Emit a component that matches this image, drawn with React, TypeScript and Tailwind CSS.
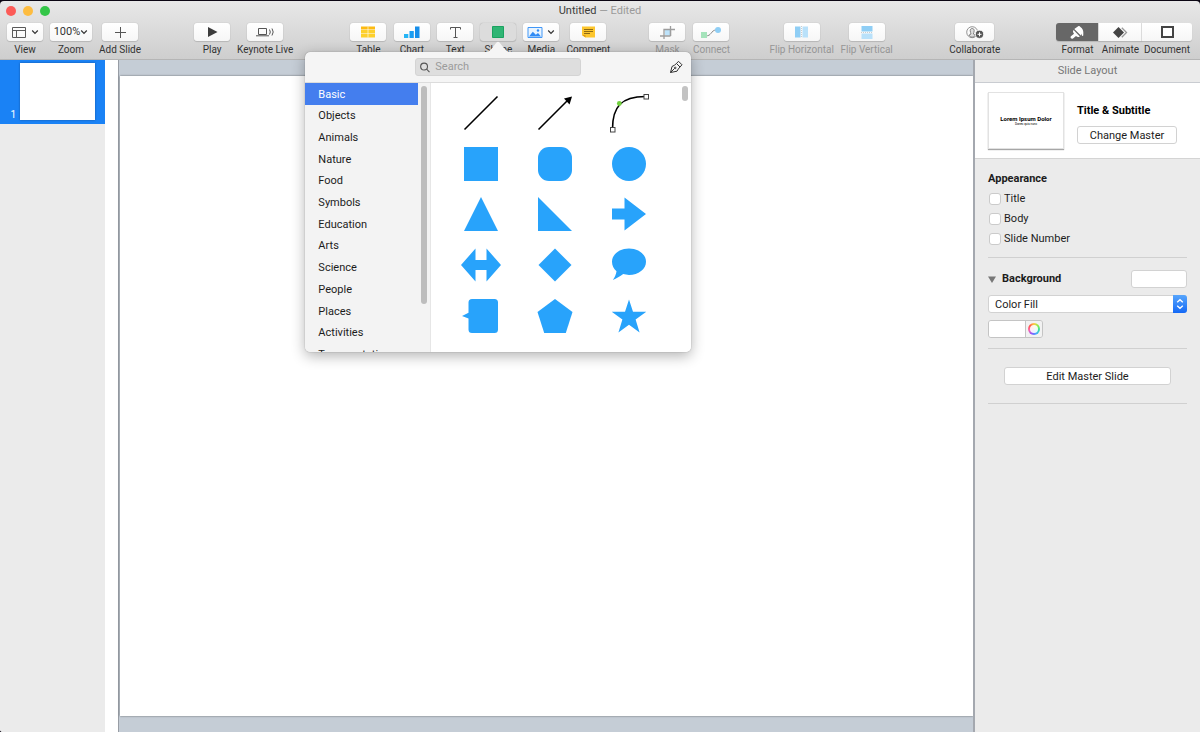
import { useState, type ReactNode } from 'react';
import clsx from 'clsx';

const CATEGORIES = [
  'Basic',
  'Objects',
  'Animals',
  'Nature',
  'Food',
  'Symbols',
  'Education',
  'Arts',
  'Science',
  'People',
  'Places',
  'Activities',
  'Transportation',
];

const SHAPES: { name: string; art: ReactNode }[] = [
  { name: 'Line', art: <path d="M3.5 36.5 36.5 3.5" stroke="#000" strokeWidth="1.6" /> },
  {
    name: 'Arrow',
    art: (
      <>
        <path d="M3.5 36.5 33 7" stroke="#000" strokeWidth="1.6" />
        <path d="M37 3.500 29 5.500l5.500 6z" fill="#000" />
      </>
    ),
  },
  {
    name: 'Curve',
    art: (
      <>
        <path d="M3.5 36C3.5 14 12 3.500 36.500 3.500" fill="none" stroke="#000" strokeWidth="1.6" />
        <rect x="1.500" y="34.500" width="4.500" height="4.500" fill="#fff" stroke="#444" strokeWidth="1" />
        <rect x="35" y="1.500" width="4.500" height="4.500" fill="#fff" stroke="#444" strokeWidth="1" />
        <circle cx="10.300" cy="10.500" r="2.400" fill="#70d13c" />
      </>
    ),
  },
  { name: 'Square', art: <path d="M3 3h34v34H3z" /> },
  { name: 'Rounded Rectangle', art: <rect x="3" y="3" width="34" height="34" rx="11" /> },
  { name: 'Circle', art: <circle cx="20" cy="20" r="17" /> },
  { name: 'Triangle', art: <path d="M20 3l17 34H3z" /> },
  { name: 'Right Triangle', art: <path d="M3 3l34 34H3z" /> },
  { name: 'Arrow Right', art: <path d="M3 14.500h12.500V3.500L37 20 15.500 36.500v-11H3z" /> },
  { name: 'Double Arrow', art: <path d="M0 20 14.500 3.500V15h11V3.500L40 20 25.500 36.500V25h-11v11.500z" /> },
  { name: 'Diamond', art: <path d="M20 3.500 36.500 20 20 36.500 3.500 20z" /> },
  {
    name: 'Speech Bubble',
    art: <path d="M20 3.500c9.500 0 17 5.800 17 13.200s-7.500 13.200-17 13.200c-2 0-4-.3-5.800-.8C11 31.500 7.500 33.600 3.800 35c2-2.700 3.300-5.500 3.700-8.700C4.700 23.800 3 20.500 3 16.700 3 9.300 10.500 3.500 20 3.500z" />,
  },
  {
    name: 'Callout',
    art: <path d="M11 3h22.500q3.500 0 3.500 3.500v27q0 3.500-3.500 3.500H11q-3.500 0-3.500-3.500V22.500L1 20l6.500-3.200V6.500Q7.500 3 11 3z" />,
  },
  { name: 'Pentagon', art: <path d="M20 3l17.500 13-6.700 21H9.200L2.500 16z" /> },
  { name: 'Star', art: <path d="M20 3.500l4 12.300h13.300l-10.700 7.800 4 12.900L20 28.700 9.400 36.500l4-12.900L2.700 15.800H16z" /> },
];

function Chevron() {
  return (
    <svg width="8" height="6" viewBox="0 0 8 6" fill="none" stroke="#333" strokeWidth="1.200">
      <path d="M1.200 1.500 4 4.300l2.800-2.800" />
    </svg>
  );
}

const ICONS = {
  view: (
    <svg width="14" height="11" viewBox="0 0 14 11" fill="none" stroke="#5a5a5a">
      <path d="M.5.500h13v10H.5zM.5 3.500h13M4.500 3.500v7" />
    </svg>
  ),
  add: (
    <svg width="11" height="11" viewBox="0 0 11 11" stroke="#555">
      <path d="M5.500 0v11M0 5.500h11" />
    </svg>
  ),
  play: (
    <svg width="11" height="10" viewBox="0 0 11 10" fill="#3c3c3c">
      <path d="M1 0l9.500 5L1 10z" />
    </svg>
  ),
  live: (
    <svg width="19" height="10" viewBox="0 0 19 10" fill="none" stroke="#555">
      <path d="M2.500 1.500h8v6h-8zM0 8.800h13" />
      <path d="M13.500 2.500q1.600 2.500 0 5M16 1.500q2.400 3.500 0 7" />
    </svg>
  ),
  table: (
    <svg width="14" height="12" viewBox="0 0 14 12">
      <path d="M0 .5h14v3H0z" fill="#fdbb12" />
      <path d="M0 4h14v3.500H0zM0 8h14v3.500H0z" fill="#fdd02c" />
      <path d="M7 .5v11" stroke="#fff" strokeWidth=".6" />
    </svg>
  ),
  chart: (
    <svg width="16" height="12" viewBox="0 0 16 12">
      <path d="M0 8h4.300v4H0z" fill="#25b4f5" />
      <path d="M5.500 5h4.300v7H5.500z" fill="#1a9df2" />
      <path d="M11 .5h4.500V12H11z" fill="#168eea" />
    </svg>
  ),
  text: (
    <svg width="11" height="11" viewBox="0 0 11 11" fill="none" stroke="#555">
      <path d="M.5 2.500v-2h10v2M5.500.5v10M3.500 10.500h4" />
    </svg>
  ),
  shape: (
    <svg width="12" height="12" viewBox="0 0 12 12">
      <path d="M.5.500h11v11H.5z" fill="#2fb574" stroke="#1ba260" />
    </svg>
  ),
  media: (
    <svg width="16" height="11" viewBox="0 0 16 11">
      <path d="M1 .5h14v10H1z" fill="#e8f4ff" stroke="#4197f7" />
      <path d="M2 9.500 5.800 4.800l3 3L11 6l3 3.500z" fill="#2f8bf5" />
      <circle cx="11" cy="3.500" r="1.200" fill="#2f8bf5" />
    </svg>
  ),
  comment: (
    <svg width="13" height="12" viewBox="0 0 13 12">
      <path d="M0 .5h13v11H3.500L0 9z" fill="#fdc62d" />
      <path d="M0 9h3.500v2.500z" fill="#e09c10" />
      <path d="M2 3.500h9M2 5.500h9M2 7.500h6" stroke="#8d6a14" />
    </svg>
  ),
  mask: (
    <svg width="15" height="13" viewBox="0 0 15 13" fill="none" stroke="#9d9d9d" strokeWidth="1.300">
      <path d="M5 4h5v5.500H5z" fill="#bde3fb" stroke="none" />
      <path d="M4 13V3.500h6.500V10M0 10h10.500" />
      <path d="M10.500 10V0M10.500 3.500H15" />
    </svg>
  ),
  connect: (
    <svg width="20" height="11" viewBox="0 0 20 11">
      <path d="M5 8.500c5 1.500 5-5.500 10-5.500" fill="none" stroke="#8b8b8b" />
      <path d="M0 5h6v6H0z" fill="#a5e3bb" />
      <circle cx="17" cy="3" r="3" fill="#8fcef5" />
    </svg>
  ),
  flipH: (
    <svg width="13" height="12" viewBox="0 0 13 12">
      <path d="M0 .5h5.500v11H0z" fill="#8fcef5" />
      <path d="M7.500.5H13v11H7.500z" fill="#b9e1fa" />
      <path d="M6.500 0v12" stroke="#ccc" strokeDasharray="1 1" />
    </svg>
  ),
  flipV: (
    <svg width="12" height="13" viewBox="0 0 12 13">
      <path d="M.5 0h11v5.500H.5z" fill="#8fcef5" />
      <path d="M.5 7.500h11V13H.5z" fill="#b9e1fa" />
      <path d="M0 6.500h12" stroke="#ccc" strokeDasharray="1 1" />
    </svg>
  ),
  collaborate: (
    <svg width="18" height="13" viewBox="0 0 18 13">
      <circle cx="6.200" cy="6.200" r="5.500" fill="none" stroke="#888" strokeWidth=".9" />
      <path d="M6.200 2.500c1.300 0 2 .9 2 2.200S7.400 7.200 7.400 8l2 1.200c-.7 1.300-1.900 1.900-3.200 1.900S3.700 10.500 3 9.200L5 8c0-.8-.8-2-.8-3.300s.7-2.200 2-2.200z" fill="#ddd" stroke="#777" strokeWidth=".9" />
      <circle cx="13.500" cy="8.300" r="4.100" fill="#555" stroke="#fff" strokeWidth=".8" />
      <path d="M13.500 6.300v4M11.500 8.300h4" stroke="#fff" />
    </svg>
  ),
  format: (
    <svg width="14" height="13" viewBox="0 0 14 13" fill="#fff">
      <path d="M4.300 3 8.200.3c.7-.5 1.700-.2 2.200.6 1.800 1.200 2.900 3.100 2.900 5.100v3.200c0 1-1.400 1-1.500 0l-.3-1.700-.6 2z" />
      <path d="M3.600 3.900l6.200 6.500c-1.200 1-2.700.7-3.800-.4l-3 2.400c-1.500 1-3.200-.7-2.100-2.100L4 7.700c-1.200-1.100-1.300-2.600-.4-3.800z" />
    </svg>
  ),
  animate: (
    <svg width="15" height="11" viewBox="0 0 15 11">
      <path d="M5.500 0 11 5.500 5.500 11 0 5.500z" fill="#444" />
      <path d="M8.800.8 13.500 5.500 8.800 10.200" fill="none" stroke="#999" strokeWidth="1.300" />
    </svg>
  ),
  document: (
    <svg width="13" height="12" viewBox="0 0 13 12">
      <path d="M1 1h11v10H1z" fill="#fff" stroke="#444" strokeWidth="2" />
    </svg>
  ),
};

interface ToolProps {
  label: string;
  width: string;
  face?: string;
  menu?: boolean;
  active?: boolean;
  disabled?: boolean;
  onClick?: () => void;
  children: ReactNode;
}

function Tool({ label, width, face = 'w-9 gap-1', menu, active, disabled, onClick, children }: ToolProps) {
  return (
    <button
      type="button"
      onClick={onClick}
      disabled={disabled}
      className={clsx('flex flex-col items-center gap-0.5 text-[10px]/[14px] whitespace-nowrap', width, disabled ? 'text-[#969696]' : 'text-[#333]')}
    >
      <span
        className={clsx(
          'flex h-[18px] items-center justify-center rounded-[3px] shadow-[0_0_1px_rgba(0,0,0,0.3),0_1px_1px_rgba(0,0,0,0.12)]',
          face,
          active ? 'bg-[#dcdcdc]' : 'bg-linear-to-b from-white to-[#f6f6f6]',
        )}
      >
        {children}
        {menu && <Chevron />}
      </span>
      {label}
    </button>
  );
}

function ShapePicker() {
  const [category, setCategory] = useState('Basic');

  return (
    <div className="absolute top-[18px] left-1/2 z-20 flex w-[386px] -translate-x-1/2 flex-col items-center">
      <svg className="relative z-10" width="26" height="11" viewBox="0 0 26 11">
        <path d="M0 11c4 0 5.500-2 7.500-4.500L11.500 1.500q1.500-1.500 3 0l4 5C20.500 9 22 11 26 11z" fill="#f5f5f5" />
      </svg>
      <div className="flex h-[300px] w-full flex-col overflow-hidden rounded-[5px] bg-[#f5f5f5] shadow-[0_0_1px_rgba(0,0,0,0.5),0_4px_14px_rgba(0,0,0,0.3)]">
        <div className="grid h-[31px] shrink-0 grid-cols-[1fr_auto_1fr] items-center border-b border-[#dcdcdc] px-2">
          <label className="col-start-2 flex h-[18px] w-[166px] items-center gap-[5px] rounded-[3px] border border-[#d4d4d4] bg-[#dedede] px-1">
            <svg width="11" height="11" viewBox="0 0 11 11" fill="none" stroke="#555" strokeWidth="1.200">
              <circle cx="4.500" cy="4.500" r="3.800" />
              <path d="M7.300 7.300 10.500 10.500" />
            </svg>
            <input aria-label="Search shapes" placeholder="Search" className="w-full bg-transparent pt-px text-[11px] outline-none placeholder:text-[#9b9b9b]" />
          </label>
          <button type="button" aria-label="Draw with pen" className="justify-self-end">
            <svg width="14" height="14" viewBox="0 0 14 14" fill="none" stroke="#333" strokeLinejoin="round">
              <path d="M1.500 12.500 3 6.500Q5.500 5.500 7.500 3.500l3.500 3.500q-2 2-3 4.200z" />
              <path d="M7.500 3.500 9.500 1.300 13 4.800 11 7M1.500 12.500 5.500 8.500" />
              <circle cx="6.200" cy="7.900" r=".8" />
            </svg>
          </button>
        </div>

        <div className="flex min-h-0 flex-1">
          <div className="flex w-[126px] shrink-0 overflow-hidden border-r border-[#e6e6e6] bg-[#f3f3f3]">
            <ul className="grid h-[282px] flex-1 auto-rows-fr">
              {CATEGORIES.map((name) => (
                <li key={name} className="grid">
                  <button
                    type="button"
                    onClick={() => setCategory(name)}
                    className={clsx('px-[13px] pt-0.5 text-left text-[11px]', name === category ? 'bg-[#447eee] text-white' : 'text-[#1c1c1c]')}
                  >
                    {name}
                  </button>
                </li>
              ))}
            </ul>
            <div className="mx-[3px] mt-[3px] h-[218px] w-[6px] rounded-full bg-[#bdbdbd]" />
          </div>
          <div className="flex flex-1 items-start justify-between bg-white pl-[13px]">
            <div className="grid h-[258px] auto-rows-fr grid-cols-[repeat(3,74px)] pt-[5px]">
              {SHAPES.map(({ name, art }) => (
                <button key={name} type="button" aria-label={name} className="flex items-center justify-center">
                  <svg width="40" height="40" viewBox="0 0 40 40" fill="#28a3fb">
                    {art}
                  </svg>
                </button>
              ))}
            </div>
            <div className="mt-[3px] mr-[3px] h-[15px] w-[6px] rounded-full bg-[#c3c3c3]" />
          </div>
        </div>
      </div>
    </div>
  );
}

function Header() {
  const [pickerOpen, setPickerOpen] = useState(true);
  const [tab, setTab] = useState('Format');
  const tabs = [
    { label: 'Format', icon: ICONS.format, width: 'w-[43px]' },
    { label: 'Animate', icon: ICONS.animate, width: 'w-[43px]' },
    { label: 'Document', icon: ICONS.document, width: 'w-[50px]' },
  ];

  return (
    <header className="relative z-10 h-[59px] shrink-0 rounded-t-[4px] border-b border-[#b5b5b5] bg-linear-to-b from-[#e8e8e8] to-[#cecece]">
      <div className="mb-0.5 grid h-5 grid-cols-[1fr_auto_1fr] items-center">
        <div className="flex gap-[7px] pl-[6px]">
          <button type="button" aria-label="Close" className="size-[10px] rounded-full bg-[#fc5b57]" />
          <button type="button" aria-label="Minimize" className="size-[10px] rounded-full bg-[#fdbc40]" />
          <button type="button" aria-label="Zoom window" className="size-[10px] rounded-full bg-[#34c648]" />
        </div>
        <h1 className="text-[11px]/[18px] text-[#9a9a9a]">
          <span className="text-[#3c3c3c]">Untitled</span> — Edited
        </h1>
      </div>

      <div className="flex items-start pr-2 pl-[3px]">
        <Tool label="View" width="w-11" face="w-9 gap-[5px]" menu>
          {ICONS.view}
        </Tool>
        <Tool label="Zoom" width="w-12" face="w-[42px] text-[11px]" menu>
          100%
        </Tool>
        <Tool label="Add Slide" width="w-[50px]">
          {ICONS.add}
        </Tool>

        <div className="grow-[49]" />
        <Tool label="Play" width="w-9">
          {ICONS.play}
        </Tool>
        <Tool label="Keynote Live" width="w-[70px]">
          {ICONS.live}
        </Tool>

        <div className="grow-[46]" />
        <Tool label="Table" width="w-11">
          {ICONS.table}
        </Tool>
        <Tool label="Chart" width="w-[43px]">
          {ICONS.chart}
        </Tool>
        <Tool label="Text" width="w-11">
          {ICONS.text}
        </Tool>
        <div className="relative">
          <Tool label="Shape" width="w-[42px]" active={pickerOpen} onClick={() => setPickerOpen(!pickerOpen)}>
            {ICONS.shape}
          </Tool>
          {pickerOpen && <ShapePicker />}
        </div>
        <Tool label="Media" width="w-11" menu>
          {ICONS.media}
        </Tool>
        <Tool label="Comment" width="w-[50px]">
          {ICONS.comment}
        </Tool>

        <div className="grow-[32]" />
        <Tool label="Mask" width="w-11" disabled>
          {ICONS.mask}
        </Tool>
        <Tool label="Connect" width="w-11" disabled>
          {ICONS.connect}
        </Tool>

        <div className="grow-[35]" />
        <Tool label="Flip Horizontal" width="w-[66px]" disabled>
          {ICONS.flipH}
        </Tool>
        <Tool label="Flip Vertical" width="w-16" disabled>
          {ICONS.flipV}
        </Tool>

        <div className="grow-[46]" />
        <Tool label="Collaborate" width="w-[60px]" face="w-[39px]">
          {ICONS.collaborate}
        </Tool>

        <div className="grow-[51]" />
        <div className="flex">
          {tabs.map(({ label, icon, width }) => (
            <button
              key={label}
              type="button"
              onClick={() => setTab(label)}
              className={clsx('group flex flex-col items-center gap-0.5 text-[10px]/[14px] text-[#333]', width)}
            >
              <span
                className={clsx(
                  'flex h-[18px] w-full items-center justify-center border-r border-[#dedede] shadow-[0_1px_1px_rgba(0,0,0,0.15)] group-first:rounded-l-[3px] group-last:rounded-r-[3px] group-last:border-r-0',
                  tab === label ? 'bg-[#676767]' : 'bg-linear-to-b from-white to-[#f6f6f6]',
                )}
              >
                {icon}
              </span>
              {label}
            </button>
          ))}
        </div>
      </div>
    </header>
  );
}

const PUSH_BUTTON = 'h-[18px] rounded-[3px] border border-[#d2d2d2] bg-white pt-px text-[11px]/[16px] text-[#1c1c1c]';

function Inspector() {
  const [expanded, setExpanded] = useState(true);

  return (
    <aside className="w-[227px] shrink-0 border-l-2 border-[#a4a8af] bg-[#ebebeb] text-[11px]/[20px] text-[#1c1c1c]">
      <h2 className="border-b border-[#c9ccd1] text-center text-[11px]/[22px] text-[#777]">Slide Layout</h2>

      <section className="flex h-[76px] items-center gap-[13px] border-b border-[#d4d4d4] bg-white px-[13px]">
        <div className="flex h-[57px] w-[76px] flex-col items-center justify-center border border-[#e2e2e2] bg-white text-center shadow-[0_1px_1px_rgba(0,0,0,0.35)]">
          <p className="text-[6px]/[7px] font-bold whitespace-nowrap text-black">Lorem Ipsum Dolor</p>
          <p className="text-[3px]/[5px] text-black">Donec quis nunc</p>
        </div>
        <div className="flex flex-1 flex-col items-start gap-[5px] pt-1">
          <h3 className="font-bold whitespace-nowrap text-black">Title &amp; Subtitle</h3>
          <button type="button" className={clsx(PUSH_BUTTON, 'w-[100px]')}>
            Change Master
          </button>
        </div>
      </section>

      <div className="px-[13px] pt-[10px]">
        <section className="border-b border-[#d0d0d0] pb-2">
          <h3 className="font-bold">Appearance</h3>
          {['Title', 'Body', 'Slide Number'].map((name) => (
            <label key={name} className="flex items-center gap-[3px] pl-px">
              <input type="checkbox" className="size-3 appearance-none rounded-[3px] border border-[#cbcbcb] bg-white checked:bg-[#1a82fb]" />
              {name}
            </label>
          ))}
        </section>

        <section className="flex flex-col gap-[7px] border-b border-[#d0d0d0] pt-3 pb-[10px]">
          <div className="flex h-[18px] items-center justify-between">
            <button type="button" onClick={() => setExpanded(!expanded)} className="flex items-center gap-[6px] font-bold">
              <svg width="8" height="7" viewBox="0 0 8 7" fill="#777">
                <path d="M0 .5h8L4 7z" />
              </svg>
              Background
            </button>
            <button type="button" aria-label="Background preview" className={clsx(PUSH_BUTTON, 'w-14 border-[#c4c4c4]')} />
          </div>
          {expanded && (
            <>
              <div className="relative flex">
                <select aria-label="Fill type" className={clsx(PUSH_BUTTON, 'flex-1 appearance-none px-[6px]')}>
                  <option>Color Fill</option>
                  <option>Gradient Fill</option>
                  <option>Image Fill</option>
                </select>
                <span className="pointer-events-none absolute inset-y-0 right-0 flex w-[14px] items-center justify-center rounded-r-[3px] bg-linear-to-b from-[#57a5fc] to-[#1368f5]">
                  <svg width="8" height="12" viewBox="0 0 8 12" fill="none" stroke="#fff" strokeWidth="1.300">
                    <path d="M1.200 4.300 4 1.700l2.800 2.600M1.200 7.700 4 10.300l2.800-2.600" />
                  </svg>
                </span>
              </div>
              <div className="flex h-[18px] w-[55px] overflow-hidden rounded-[3px] border border-[#c4c4c4]">
                <button type="button" aria-label="Fill color" className="flex-1 bg-white" />
                <button type="button" aria-label="Color wheel" className="flex w-[17px] items-center justify-center border-l border-[#c4c4c4] bg-[#f2f2f2]">
                  <span className="flex size-[12px] items-center justify-center rounded-full bg-[conic-gradient(#fc4,#8e4,#3da,#4af,#85f,#f6a,#f54,#fc4)]">
                    <span className="size-[8px] rounded-full bg-white/90" />
                  </span>
                </button>
              </div>
            </>
          )}
        </section>

        <section className="flex border-b border-[#d0d0d0] px-4 py-[18px]">
          <button type="button" className={clsx(PUSH_BUTTON, 'flex-1')}>
            Edit Master Slide
          </button>
        </section>
      </div>
    </aside>
  );
}

export default function App() {
  return (
    <div className="flex h-screen flex-col overflow-hidden bg-[#0b0613] pt-px font-[Roboto,sans-serif]">
      <Header />
      <main className="flex min-h-0 flex-1 overflow-hidden rounded-bl-[3px] bg-white">
        <nav aria-label="Slides" className="w-[105px] shrink-0 bg-[#ebebeb]">
          <button type="button" className="flex h-16 w-full items-end justify-end gap-1 bg-[#1a82f5] pr-[10px] pb-1 text-[10px]/[10px] text-white">
            1
            <span className="h-[57px] w-[75px] bg-white shadow-[0_0_2px_rgba(0,0,0,0.35)]" />
          </button>
        </nav>
        <div className="w-[13px] shrink-0 bg-white" />
        <div className="flex flex-1 border-l border-[#989da5] bg-[#c5cdd6] py-4 pl-px">
          <div className="flex-1 bg-white shadow-[0_0_2px_rgba(0,0,0,0.5)]" />
        </div>
        <Inspector />
      </main>
    </div>
  );
}
